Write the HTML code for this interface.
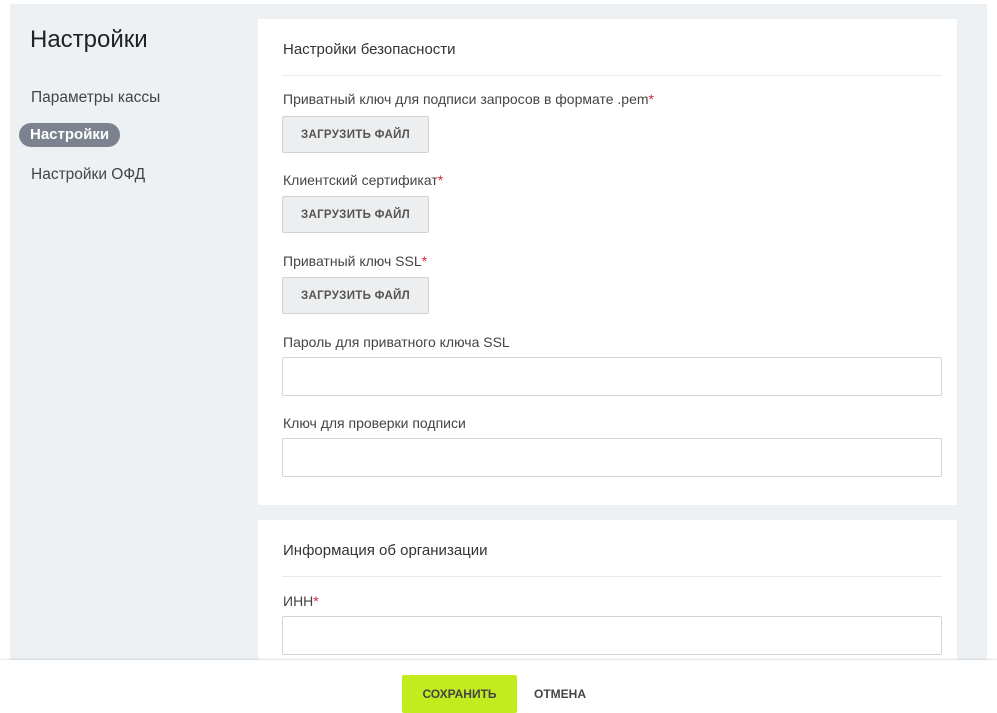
<!DOCTYPE html><html><head><meta charset="utf-8"><style>
body{margin:0;width:997px;height:713px;background:#fff;font-family:"Liberation Sans",sans-serif;position:relative;overflow:hidden}
.bg{position:absolute;left:10px;top:4px;width:977px;height:656px;background:#eef1f4}
.card{position:absolute;left:258px;width:699px;background:#fff}
.h{position:absolute;left:25px;font-size:15px;color:#333}
.hr{position:absolute;left:24px;right:15px;height:1px;background:#e8ebee}
.l{position:absolute;left:25px;font-size:14px;color:#444}
.l b{color:#e02040;font-weight:normal}
.btn{position:absolute;left:24px;width:145px;height:35px;background:#eceeef;border:1px solid #cfd3d6;font-size:11.5px;font-weight:bold;color:#555;text-align:center;line-height:36px;letter-spacing:.3px;border-radius:2px}
.in{position:absolute;left:24px;width:658px;height:37px;border:1px solid #d2d6da;border-radius:2px}
.side{position:absolute;font-size:15.5px;color:#444}
</style></head><body>
<div class="bg"></div>
<div style="position:absolute;left:30px;top:26px;font-size:24px;color:#222">Настройки</div>
<div class="side" style="left:31px;top:89px">Параметры кассы</div>
<div style="position:absolute;left:19px;top:123px;width:101px;height:24px;border-radius:12px;background:#7c8290;color:#fff;font-size:15px;font-weight:bold;line-height:24px;padding-left:11px;box-sizing:border-box">Настройки</div>
<div class="side" style="left:31px;top:166px">Настройки ОФД</div>
<div class="card" style="top:19px;height:486px">
<div class="h" style="top:22px">Настройки безопасности</div>
<div class="hr" style="top:56px"></div>
<div class="l" style="top:72px">Приватный ключ для подписи запросов в формате .pem<b>*</b></div>
<div class="btn" style="top:97px">ЗАГРУЗИТЬ ФАЙЛ</div>
<div class="l" style="top:153px">Клиентский сертификат<b>*</b></div>
<div class="btn" style="top:177px">ЗАГРУЗИТЬ ФАЙЛ</div>
<div class="l" style="top:234px">Приватный ключ SSL<b>*</b></div>
<div class="btn" style="top:258px">ЗАГРУЗИТЬ ФАЙЛ</div>
<div class="l" style="top:315px">Пароль для приватного ключа SSL</div>
<div class="in" style="top:338px"></div>
<div class="l" style="top:396px">Ключ для проверки подписи</div>
<div class="in" style="top:419px"></div>
</div>
<div class="card" style="top:520px;height:140px">
<div class="h" style="top:22px">Информация об организации</div>
<div class="hr" style="top:56px"></div>
<div class="l" style="top:73px">ИНН<b>*</b></div>
<div class="in" style="top:96px"></div>
</div>
<div style="position:absolute;left:0;top:660px;width:997px;height:53px;background:#fff;box-shadow:0 -1px 2px rgba(0,0,0,.12)"></div>
<div style="position:absolute;left:402px;top:675px;width:115px;height:38px;background:#c2ec1e;border-radius:2px;font-size:12px;font-weight:bold;color:#444;text-align:center;line-height:38px">СОХРАНИТЬ</div>
<div style="position:absolute;left:534px;top:675px;height:38px;line-height:38px;font-size:12px;font-weight:bold;color:#444">ОТМЕНА</div>
</body></html>
